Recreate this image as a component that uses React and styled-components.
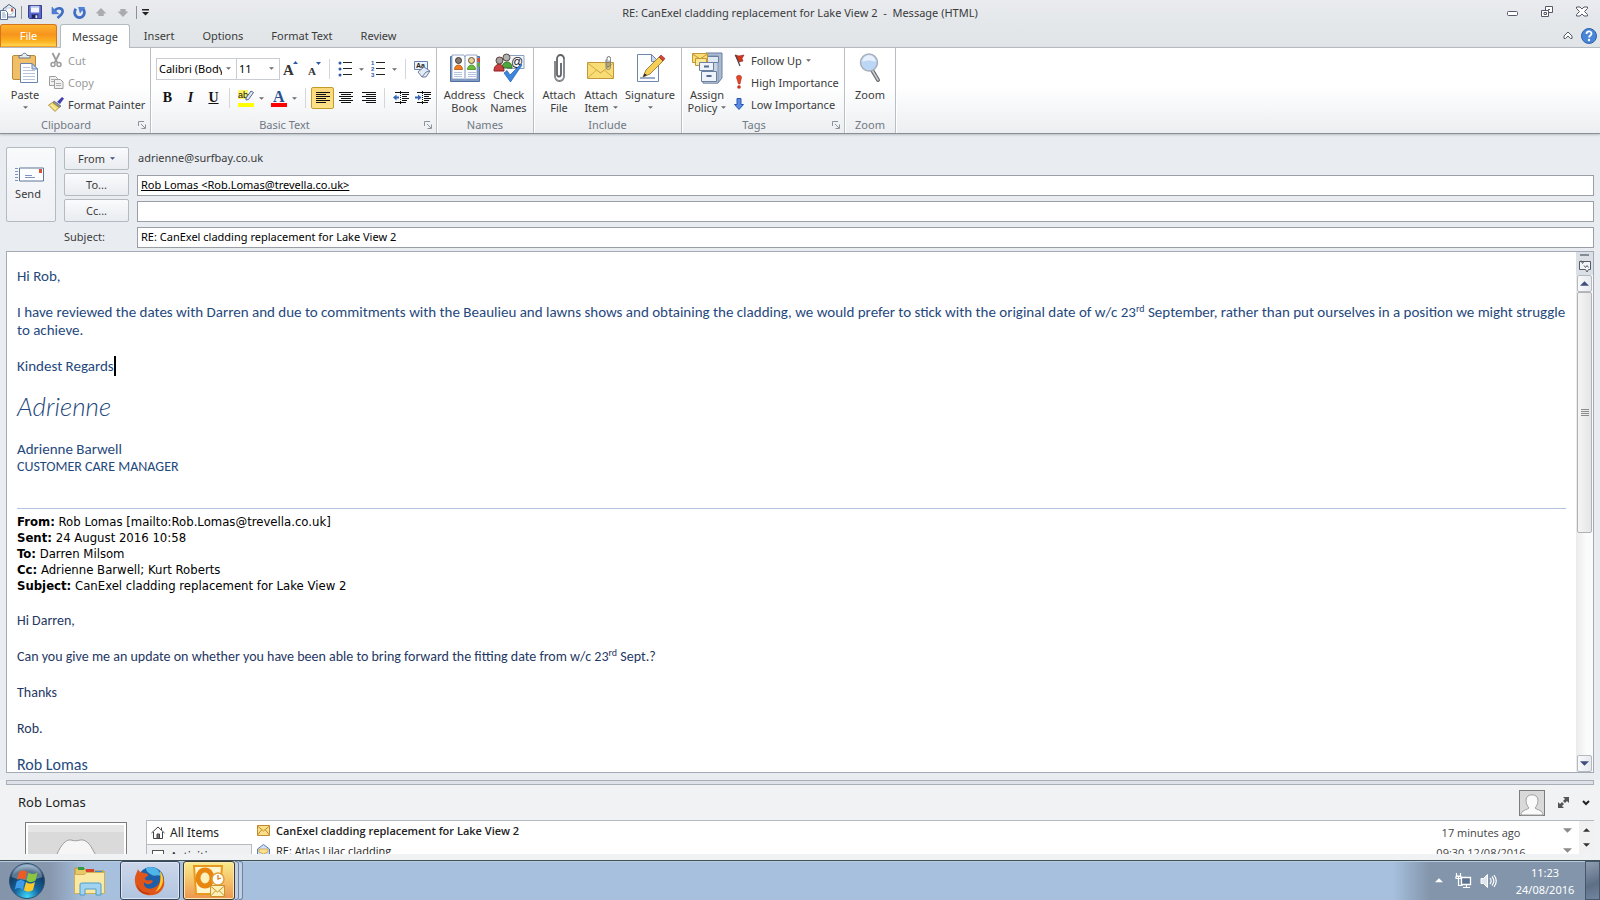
import React from 'react';
import styled, { createGlobalStyle, css } from 'styled-components';

const ui = '"Noto Sans", "Open Sans", sans-serif';
const calibri = 'Calibri, Carlito, Lato, sans-serif';
const tahoma = 'Tahoma, "DejaVu Sans Condensed", "DejaVu Sans", sans-serif';

const GlobalStyle = createGlobalStyle`
  * {
    box-sizing: border-box;
  }

  body {
    margin: 0;
    font-family: ${ui};
    font-size: 11px;
    line-height: 13px;
    color: #3b3b3b;
    background: #e9edf2;
  }

  button, input, select {
    font: inherit;
    color: inherit;
    margin: 0;
    padding: 0;
    border: 0;
    background: none;
    outline: none;
  }

  svg {
    display: block;
    flex: none;
  }
`;

const Window = styled.div`
  height: 100vh;
  display: flex;
  flex-direction: column;
  overflow: hidden;
`;

/* title bar */

const TitleBar = styled.header`
  display: grid;
  grid-template-columns: 1fr auto 1fr;
  align-items: center;
  height: 24px;
  background: linear-gradient(#eaebef, #e3e7ea);

  h1 {
    margin: 0;
    font-size: 11px;
    line-height: 13px;
    font-weight: normal;
    white-space: pre;
  }
`;

const QuickAccess = styled.div`
  display: flex;
  align-items: center;
  gap: 6px;
  height: 22px;
`;

const IconButton = styled.button`
  display: flex;
  align-items: center;
  justify-content: center;
  width: 16px;
  height: 16px;
`;

const Bar = styled.span`
  width: 1px;
  height: 13px;
  margin: 0 -1px;
  background: #8d9299;
`;

const WindowButtons = styled.div`
  display: flex;
  justify-content: flex-end;
  gap: 19px;
  padding-right: 10px;
`;

/* tabs */

const Tabs = styled.nav`
  display: flex;
  align-items: stretch;
  height: 23px;
  background: linear-gradient(#e3e7ea, #e1e5e7);
`;

const Tab = styled.button`
  padding: 0 14px;
  height: 23px;

  ${({ $file }) => $file && css`
    width: 57px;
    margin-right: 3px;
    color: #fff;
    border: 1px solid #d9741c;
    border-bottom-color: #f4a21d;
    border-radius: 3px 3px 0 0;
    background: linear-gradient(#fdb52e, #f7941d 45%, #fbb01f 75%, #ffd34d);
  `}

  ${({ $active }) => $active && css`
    height: 24px;
    padding: 0 11px;
    z-index: 1;
    border: 1px solid #b5bac0;
    border-bottom: 0;
    border-radius: 3px 3px 0 0;
    background: #fff;
  `}
`;

const TabEnd = styled.div`
  display: flex;
  align-items: center;
  gap: 5px;
  margin-left: auto;
  padding-right: 3px;
`;

/* ribbon */

const Ribbon = styled.section`
  display: flex;
  height: 87px;
  flex: none;
  border-top: 1px solid #b5bac0;
  border-bottom: 1px solid #8b9097;
  background: linear-gradient(#fff, #fff 45%, #eceef1);
  box-shadow: 0 1px 2px #b9bdc4;
`;

const GroupBox = styled.div`
  display: flex;
  flex-direction: column;
  width: ${({ $width }) => $width}px;
  border-right: 1px solid #b9bec5;
  box-shadow: 1px 0 0 #fff;
`;

const GroupBody = styled.div`
  display: flex;
  height: 69px;
  padding-left: ${({ $indent }) => $indent || 0}px;
`;

const GroupLabel = styled.div`
  display: flex;
  align-items: center;
  height: 15px;
  color: #707985;

  span {
    flex: 1;
    text-align: center;
  }

  button {
    display: flex;
    align-items: center;
    justify-content: flex-end;
    width: 18px;
    height: 15px;
    padding-right: 4px;
  }
`;

const LargeButton = styled.button`
  display: flex;
  flex-direction: column;
  align-items: center;
  width: ${({ $width }) => $width}px;
  padding-top: 4px;
  white-space: nowrap;

  > svg {
    margin-bottom: 4px;
  }
`;

const Line = styled.span`
  display: flex;
  align-items: center;
  gap: 4px;
  height: 13px;
`;

const SmallColumn = styled.div`
  display: flex;
  flex-direction: column;
  padding: 1px 0 0 1px;
`;

const SmallButton = styled.button`
  display: flex;
  align-items: center;
  gap: 4px;
  height: 22px;
  white-space: nowrap;
  color: ${({ disabled }) => (disabled ? '#9a9a9a' : '#3b3b3b')};
`;

const ToolRows = styled.div`
  display: flex;
  flex-direction: column;
  gap: 7px;
  padding-top: 10px;
`;

const ToolRow = styled.div`
  display: flex;
  align-items: center;
  height: 22px;
`;

const Combo = styled.label`
  display: flex;
  align-items: center;
  width: ${({ $width }) => $width}px;
  height: 22px;
  margin-right: -1px;
  padding: 0 5px 1px 0;
  border: 1px solid #c9cdd3;
  background: #fff;
  color: #000;

  select {
    flex: 1;
    min-width: 0;
    appearance: none;
    margin-right: 4px;
    padding-left: 2px;
    overflow: hidden;
    text-overflow: clip;
  }
`;

const Tool = styled.button`
  display: flex;
  align-items: center;
  justify-content: center;
  width: ${({ $width }) => $width || 23}px;
  height: 22px;

  ${({ $on }) => $on && css`
    border: 1px solid #c29b29;
    border-radius: 2px;
    background: linear-gradient(#fbd77a, #fde28a);
  `}
`;

const Letter = styled.span`
  font: 14px/18px "Liberation Serif", serif;
  font-weight: bold;
  font-style: ${({ $italic }) => ($italic ? 'italic' : 'normal')};
  text-decoration: ${({ $underline }) => ($underline ? 'underline' : 'none')};
  color: #111;
`;

const SplitTool = styled.button`
  display: flex;
  align-items: center;
  gap: 5px;
  width: 33px;
  height: 22px;
  padding-left: 3px;
`;

const Separator = styled.span`
  width: 1px;
  height: 20px;
  margin: 0 5px 0 4px;
  background: #d3d7dc;
`;

/* message header */

const Fields = styled.form`
  display: grid;
  grid-template-columns: 50px 65px 1fr;
  grid-auto-rows: 23px;
  gap: 3px 8px;
  padding: 13px 6px 3px;
  flex: none;
`;

const FieldButton = styled.button`
  display: flex;
  align-items: center;
  justify-content: center;
  gap: 5px;
  border: 1px solid #b5bac1;
  border-radius: 2px;
  background: linear-gradient(#f9fbfd, #f1f3f6 50%, #e9ecf0);
`;

const SendButton = styled(FieldButton)`
  grid-row: span 3;
  flex-direction: column;
  background: linear-gradient(#f8fafc, #eef0f4);
  padding: 0 6px 2px 0;

  svg {
    margin-left: 3px;
  }
`;

const FieldLabel = styled.label`
  grid-column: 2;
  align-self: center;
`;

const FromAddress = styled.span`
  align-self: start;
  padding: 4px 0 0 1px;
`;

const Field = styled.input`
  align-self: end;
  height: 21px;
  padding: 0 3px 2px;
  border: 1px solid #9a9fa7;
  background: #fff;
  color: #000;
  text-decoration: ${({ $recipient }) => ($recipient ? 'underline' : 'none')};
`;

/* message body */

const Editor = styled.section`
  display: flex;
  flex: 1;
  min-height: 0;
  margin: 0 6px 7px;
  border: 1px solid #a3aab5;
  background: #fff;
`;

const Message = styled.article`
  flex: 1;
  min-width: 0;
  overflow: hidden;
  padding: 15px 10px 0;
  font: 15px/18px ${calibri};
  color: #1f497d;

  p {
    margin: 0 0 18px;
  }

  sup {
    font-size: 10px;
    line-height: 0;
    vertical-align: 5px;
  }

  hr {
    margin: 33px 0 5px;
    border: 0;
    border-top: 1px solid #b5c4df;
  }
`;

const Caret = styled.span`
  border-right: 2px solid #000;
  padding: 1px 0;
`;

const Signature = styled.div`
  margin-bottom: 22px;
  font: italic 300 26px/26px "Segoe Print", Lato, sans-serif;
`;

const Contact = styled.p`
  line-height: 17px;
`;

const JobTitle = styled.span`
  font-size: 14px;
`;

const QuotedHeader = styled.div`
  margin-bottom: 18px;
  font: 13px/16px ${tahoma};
  color: #000;
`;

const Quoted = styled.div`
  font-size: 14px;
  color: #1f3864;
`;

const QuotedName = styled.p`
  font-size: 16px;
  color: #1f497d;
`;

const Scrollbar = styled.div`
  display: flex;
  flex-direction: column;
  align-items: center;
  width: 17px;
  background: linear-gradient(to right, #ebebed, #fbfbfb 60%);
`;

const ScrollTools = styled.div`
  display: flex;
  flex-direction: column;
  align-items: center;
  gap: 4px;
  width: 17px;
  height: 23px;
  padding-top: 2px;
  background: #dbe0e7;
`;

const ScrollButton = styled.button`
  display: flex;
  align-items: center;
  justify-content: center;
  width: 15px;
  height: 17px;
  border: 1px solid #b4b9c1;
  border-radius: 2px;
  background: linear-gradient(to right, #f8f9fb, #e6e9ee);
`;

const ScrollTrack = styled.div`
  flex: 1;
  display: flex;
  width: 15px;
`;

const ScrollThumb = styled.div`
  display: flex;
  align-items: center;
  justify-content: center;
  width: 15px;
  height: 52%;
  border: 1px solid #afb1b4;
  border-radius: 2px;
  background: linear-gradient(to right, #f5f5f5, #e5e5e5);
`;

/* people pane */

const PeoplePane = styled.aside`
  flex: none;
  height: 80px;
  padding: 0 6px 6px;
  display: flex;
  flex-direction: column;
  background: #f1f2f4;
`;

const Splitter = styled.div`
  flex: none;
  height: 5px;
  border: 1px solid #a9afb8;
  background: #dfe2e8;
`;

const PersonRow = styled.div`
  flex: none;
  display: flex;
  align-items: center;
  height: 35px;
  padding: 0 4px 0 12px;
  font-size: 13px;
  color: #222;

  svg {
    margin-left: 13px;
  }

  svg:first-of-type {
    margin-left: auto;
  }
`;

const PersonBody = styled.div`
  flex: 1;
  min-height: 0;
  display: flex;
  align-items: flex-start;
  overflow: hidden;
`;

const Photo = styled.div`
  width: 102px;
  height: 96px;
  margin: 2px 19px 0 19px;
  padding: 2px;
  border: 1px solid #7d7d7d;
  background: #fff;
  flex: none;
`;

const Filters = styled.div`
  width: 106px;
  flex: none;
  border-left: 1px solid #b5bac1;
`;

const Filter = styled.button`
  display: flex;
  align-items: center;
  gap: 5px;
  width: 100%;
  height: 24px;
  padding-left: 4px;
  border-top: 1px solid #b5bac1;
  border-right: ${({ $active }) => ($active ? 0 : '1px solid #b5bac1')};
  background: ${({ $active }) => ($active ? '#fff' : '#eff0f2')};
  font-size: 12px;
  color: #222;
`;

const Items = styled.ul`
  flex: 1;
  margin: 0;
  padding: 0;
  list-style: none;
  border-top: 1px solid #b5bac1;
  background: #fff;
`;

const Item = styled.li`
  display: grid;
  grid-template-columns: 14px 1fr 138px 24px;
  column-gap: 5px;
  align-items: center;
  height: 20px;
  padding: 0 0 1px 5px;
  color: #222;
  font-family: "Open Sans", sans-serif;
  font-weight: ${({ $unread }) => ($unread ? 600 : 400)};

  time {
    padding-top: 4px;
    text-align: center;
    font-weight: normal;
    color: #444;
  }

  svg:last-child {
    justify-self: center;
  }
`;

const ItemsScroll = styled.div`
  display: flex;
  flex-direction: column;
  align-items: center;
  gap: 11px;
  width: 15px;
  height: 60px;
  padding-top: 7px;
  border-top: 1px solid #b5bac1;
  background: #f1f1f1;
`;

/* taskbar */

const Taskbar = styled.footer`
  flex: none;
  display: flex;
  align-items: stretch;
  height: 40px;
  border-top: 1px solid #3d5157;
  box-shadow: inset 0 1px 0 #b9cbe0;
  background: linear-gradient(
    to right,
    #8494ab 0,
    #8797ae 50px,
    #a6c0dd 85px,
    #a6c0dd calc(100% - 207px),
    #8395ab calc(100% - 170px),
    #8395ab 100%
  );
`;

const StartButton = styled.button`
  padding: 0 0 0 8px;
  margin-right: 17px;
`;

const TaskButton = styled.button`
  display: flex;
  align-items: center;
  justify-content: center;
  width: ${({ $width }) => $width}px;
  margin-right: 3px;

  ${({ $open }) => $open && css`
    border: 1px solid #39475c;
    border-radius: 3px;
    box-shadow: inset 0 0 0 1px #dce6f3;
    background: linear-gradient(#cbd7ea, #b1c4df);
  `}

  ${({ $active }) => $active && css`
    margin-right: 0;
    border: 1px solid #3f3a2b;
    border-radius: 3px;
    box-shadow: inset 0 0 0 1px #fbe9b5;
    background: linear-gradient(#f8ec8c, #f6c269 50%, #ee9550);
  `}
`;

const StackEdge = styled.span`
  width: 4px;
  border: 1px solid #6d83a0;
  border-left: 0;
  border-radius: 0 3px 3px 0;
  background: #c1d0e4;
`;

const Tray = styled.div`
  display: flex;
  align-items: center;
  gap: 8px;
  margin-left: auto;
`;

const TrayButton = styled.button`
  padding: 4px;
`;

const Clock = styled.time`
  width: 80px;
  text-align: center;
  line-height: 17px;
  color: #fff;
`;

const ShowDesktop = styled.button`
  width: 15px;
  border: 1px solid #46566b;
  background: linear-gradient(160deg, #8f9db0, #5d6f86 60%, #7286a0);
`;

/* icons */

const Arrow = ({ color = '#6b6b6b', size = 5, up }) => (
  <svg width={size} height={(size + 1) / 2} viewBox="0 0 6 3">
    <path d={up ? 'M0 3h6L3 0z' : 'M0 0h6L3 3z'} fill={color} />
  </svg>
);

const Launcher = () => (
  <svg width="8" height="8" viewBox="0 0 8 8" fill="none" stroke="#8b929b">
    <path d="M.5 5V.5H6M3 3l4 4M7.500 3.500v4h-4" />
  </svg>
);

const MailAppIcon = () => (
  <svg width="16" height="16" viewBox="0 0 16 16">
    <path d="M3 5l6-4.500L15.500 5v8H5z" fill="#eef3fa" stroke="#44597b" />
    <path d="M6 4h7v5l-3 2-4-2z" fill="#fff" stroke="#8fa2bf" strokeWidth=".6" />
    <rect x="11" y="4.500" width="2" height="3" fill="#e0582c" />
    <path d="M.5 6.500h5l2 2v7h-7z" fill="#fff" stroke="#566f96" />
    <path d="M2 9h3M2 11h4M2 13h4" stroke="#8ba0c4" />
  </svg>
);

const SaveIcon = () => (
  <svg width="14" height="14" viewBox="0 0 15 15">
    <path d="M.5.5h14v14h-13l-1-1z" fill="#5a6ad0" stroke="#2b3580" />
    <rect x="3" y="1" width="9" height="7" fill="#f4f6fc" />
    <rect x="3" y="1" width="9" height="2" fill="#b8c8ee" />
    <rect x="4" y="10" width="7" height="4" fill="#1e2762" />
    <rect x="8" y="11" width="2" height="3" fill="#e8ebf6" />
  </svg>
);

const UndoIcon = () => (
  <svg width="13" height="13" viewBox="0 0 14 14" fill="none">
    <path d="M4 5c3-4 9-3 8.500 1.500C12 9 10 10.500 7 13" stroke="#3f6fc4" strokeWidth="2.800" />
    <path d="M1 1v7.500h7.500z" fill="#4f80d8" stroke="#3f6fc4" strokeWidth=".5" />
  </svg>
);

const RedoIcon = () => (
  <svg width="13" height="13" viewBox="0 0 14 14" fill="none">
    <path d="M3 3C0 8 3 12.500 7 12.500S14 8 11 3" stroke="#3f6fc4" strokeWidth="3" />
    <path d="M5.500 1H13L7.500 8z" fill="#4f80d8" />
  </svg>
);

const NavArrow = ({ down }) => (
  <svg width="12" height="9" viewBox="0 0 12 10">
    <path d={down ? 'M6 10l6-6H9V1H3v3H0z' : 'M6 0l6 6H9v3H3V6H0z'} fill="#a9abae" />
  </svg>
);

const CustomizeIcon = () => (
  <svg width="7" height="7" viewBox="0 0 7 7">
    <path d="M0 0h7v1.500H0zM0 3h7L3.500 6.500z" fill="#222" />
  </svg>
);

const MinimizeIcon = () => (
  <svg width="11" height="12" viewBox="0 0 11 12">
    <rect x=".5" y="5.500" width="10" height="4" rx="1" fill="#fff" stroke="#545869" />
  </svg>
);

const RestoreIcon = () => (
  <svg width="12" height="12" viewBox="0 0 12 12" fill="#fff" stroke="#545869">
    <path d="M4.500.5h7v6h-7z" />
    <path d="M7 3.500h2" />
    <path d="M.5 4.500h7v6h-7z" />
    <path d="M3 6.500h2.500v2H3z" />
  </svg>
);

const CloseIcon = () => (
  <svg width="12" height="12" viewBox="0 0 12 12">
    <path d="M.5 1h3.500L6 3l2-2h3.500v1.500L8.500 5.500l3 3V10H8L6 8l-2 2H.5V8.500l3-3-3-3z" fill="#fff" stroke="#545869" />
  </svg>
);

const CollapseIcon = () => (
  <svg width="10" height="9" viewBox="0 0 10 9">
    <path d="M5 1l4 4v2.500H7.500L5 5 2.500 7.500H1V5z" fill="#fff" stroke="#545869" />
  </svg>
);

const HelpIcon = () => (
  <svg width="16" height="16" viewBox="0 0 16 16" fill="none">
    <circle cx="8" cy="8" r="7.500" fill="#4a86d8" stroke="#2f62ad" />
    <path d="M5.500 6c0-3.500 5-3.300 5-.5 0 2-2.400 2-2.400 4" stroke="#fff" strokeWidth="1.800" />
    <circle cx="8" cy="12" r="1.200" fill="#fff" />
  </svg>
);

const PasteIcon = () => (
  <svg width="28" height="32" viewBox="0 0 28 32">
    <rect x="1.500" y="3.500" width="23" height="24" rx="1.500" fill="#f0bf67" stroke="#b98a3c" />
    <path d="M8 6V3.500h3C11 .5 16 .5 16 3.500h3V6z" fill="#e8ebef" stroke="#6b7482" />
    <path d="M9.500 11.500H21l5.500 5.500v13.500h-17z" fill="#fff" stroke="#6984ad" />
    <path d="M21 11.500V17h5.500z" fill="#cbdaf0" stroke="#6984ad" />
    <path d="M12 15.500h7M12 18.500h12M12 21.500h12M12 24.500h12M12 27.500h12" stroke="#b7c3d8" />
  </svg>
);

const CutIcon = () => (
  <svg width="16" height="16" viewBox="0 0 16 16" fill="none" stroke="#9c9c9c">
    <path d="M4.500 1l4.700 9.500M11.500 1L6.800 10.500" strokeWidth="1.800" />
    <circle cx="5" cy="12.500" r="2" strokeWidth="1.500" />
    <circle cx="11" cy="12.500" r="2" strokeWidth="1.500" />
  </svg>
);

const CopyIcon = () => (
  <svg width="16" height="16" viewBox="0 0 16 16" fill="#f1f1f1" stroke="#9d9d9d">
    <path d="M1.500 2.500h6l2 2v7h-8z" />
    <path d="M6.500 5.500h6l2.500 2.500v6.500H6.500z" />
    <path d="M3 5.500h3M3 7.500h3M8 9.500h5M8 11.500h5" strokeWidth=".8" />
  </svg>
);

const PainterIcon = () => (
  <svg width="16" height="16" viewBox="0 0 16 16">
    <path d="M9 6l5-5 2 1.500L12 8z" fill="#453fae" />
    <path d="M6 5l7 5-1.500 1.500-7-4.500z" fill="#8c949f" stroke="#4b5361" strokeWidth=".6" />
    <path d="M4.500 6.500l6.500 5-4 4L.5 9z" fill="#f4dc75" stroke="#a4852f" strokeWidth=".8" />
    <path d="M3 9l5 4" stroke="#fff7c9" />
  </svg>
);

const GrowFont = ({ shrink }) => (
  <svg width="18" height="18" viewBox="0 0 18 18">
    <text x={shrink ? 3 : 1} y="15" fontFamily="Liberation Serif" fontWeight="bold" fontSize={shrink ? 11 : 15} fill="#333">A</text>
    <path d={shrink ? 'M11 2h5l-2.500 3z' : 'M11 4h5l-2.500-3z'} fill="#2c5aa8" />
  </svg>
);

const ListIcon = ({ numbered }) => (
  <svg width="16" height="16" viewBox="0 0 16 16">
    {[2, 8, 14].map((y, i) => (
      <g key={y}>
        {numbered
          ? <text x="0" y={y + 2} fontFamily="Liberation Sans" fontSize="6" fontWeight="bold" fill="#2c5aa8">{i + 1}</text>
          : <circle cx="2" cy={y} r="1.500" fill="#2c5aa8" />}
        <path d={`M5 ${y - .5}h9`} stroke="#222" />
      </g>
    ))}
  </svg>
);

const ClearIcon = () => (
  <svg width="18" height="18" viewBox="0 0 18 18">
    <path d="M1.500 1.500h13v8h-13z" fill="#eef3fb" stroke="#6481b0" />
    <text x="3" y="8" fontFamily="Liberation Sans" fontSize="7" fontWeight="bold" fill="#222">Aa</text>
    <path d="M5 12l6-5 6 4-4 6H9z" fill="#e3ebf8" stroke="#6f7f9d" />
    <path d="M9 17l4-5 4-1" fill="none" stroke="#6f7f9d" />
  </svg>
);

const HighlightIcon = () => (
  <svg width="16" height="18" viewBox="0 0 16 18">
    <rect y="1" width="10" height="9" fill="#fdf36a" />
    <text x="0" y="9" fontFamily="Liberation Sans" fontSize="9" fill="#111">ab</text>
    <path d="M8 9l5-7 2.500 1.500-5 7L8 11z" fill="#dfe8f5" stroke="#51698f" />
    <rect y="14" width="16" height="4" fill="#ffff00" />
  </svg>
);

const FontColorIcon = () => (
  <svg width="16" height="18" viewBox="0 0 16 18">
    <text x="2" y="13" fontFamily="Liberation Serif" fontWeight="bold" fontSize="16" fill="#2c4f8f">A</text>
    <rect y="14" width="16" height="4" fill="#ff0000" />
  </svg>
);

const alignments = { left: 0, center: 2, right: 4 };

const AlignIcon = ({ kind }) => (
  <svg width="14" height="12" viewBox="0 0 14 12">
    {[0, 1, 2, 3, 4, 5].map(i => (
      <rect key={i} x={i % 2 ? alignments[kind] : 0} y={i * 2} width={i % 2 ? 10 : 14} height="1" fill="#111" />
    ))}
  </svg>
);

const IndentIcon = ({ out }) => (
  <svg width="16" height="14" viewBox="0 0 16 14">
    <path d="M2 1.500h14M9 3.500h7M9 5.500h5M9 7.500h7M9 9.500h5M2 11.500h11" stroke="#111" />
    <path d="M7.500 0v14" stroke="#111" strokeDasharray="1 1" />
    <path d={out ? 'M0 6.500L3.500 3.500v2H6v2H3.500v2z' : 'M6.500 6.500L3 3.500v2H0v2h3v2z'} fill="#3466b8" />
  </svg>
);

const AddressBookIcon = () => (
  <svg width="32" height="32" viewBox="0 0 32 32">
    <path d="M1.500 4.500h29v25h-29z" fill="#7f9cc9" stroke="#51709f" />
    <path d="M28 6h3v4h-3z" fill="#d84b32" />
    <path d="M28 11h3v4h-3z" fill="#5fae3f" />
    <path d="M3 3h12l1 2 1-2h11v24H17l-1 1-1-1H3z" fill="#fafcff" stroke="#8195b5" strokeWidth=".8" />
    <path d="M16 5v22" stroke="#8195b5" />
    <path d="M5.500 17.500c0-6 8-6 8 0z" fill="#ef7d1a" stroke="#b1520c" strokeWidth=".8" />
    <circle cx="9.500" cy="8.500" r="3" fill="#8b7a70" stroke="#3e3632" />
    <path d="M18.500 17.500c0-6 8-6 8 0z" fill="#6ebd3a" stroke="#3f8a1f" strokeWidth=".8" />
    <circle cx="22.500" cy="8.500" r="3" fill="#e8cf94" stroke="#5e5333" />
    <path d="M5 20.500h8M5 22.500h8M5 24.500h8M19 20.500h8M19 22.500h8M19 24.500h8" stroke="#b7c5dc" />
  </svg>
);

const CheckNamesIcon = () => (
  <svg width="32" height="32" viewBox="0 0 32 32">
    <path d="M14 3.500h17v13H14" fill="#f3f7fd" stroke="#8ba0c0" />
    <text x="18" y="14" fontFamily="Liberation Sans" fontSize="12" fill="#222">@</text>
    <path d="M9 16c0-8 10-8 10 0z" fill="#4da53f" stroke="#2c7424" />
    <circle cx="13.500" cy="5.500" r="3.500" fill="#b5b1ad" stroke="#4d4844" />
    <path d="M1 19c0-9 10-9 10 0z" fill="#c93f3f" stroke="#8f2020" />
    <circle cx="6.500" cy="8.500" r="3.500" fill="#a7a3a0" stroke="#5c3a3a" />
    <path d="M11 21l3-2.500 3 4.500L28 12l1 1-11.500 17z" fill="#3d86dd" stroke="#1f5fb4" strokeWidth=".7" />
  </svg>
);

const ClipPath = ({ x, y, k }) => (
  <g transform={`translate(${x} ${y}) scale(${k})`} fill="none">
    <path d="M2 7v15a4.500 5 0 0 0 9 0V5a3.500 4 0 0 0-7 0v15a2 2.500 0 0 0 4 0V9" stroke="#5d6369" strokeWidth="1.800" />
    <path d="M2 7v15a4.500 5 0 0 0 9 0V5" stroke="#d8dcdf" strokeWidth=".5" />
  </g>
);

const AttachFileIcon = () => (
  <svg width="32" height="32" viewBox="0 0 32 32"><ClipPath x={10} y={2} k={1} /></svg>
);

const AttachItemIcon = () => (
  <svg width="32" height="32" viewBox="0 0 32 32">
    <path d="M2.500 10.500h26v16h-26z" fill="#f8dc74" stroke="#c1973a" />
    <path d="M2.500 26l9-8 4 3 4-3 9 8M2.500 11l13 10 13-10" fill="none" stroke="#d3ac4c" />
    <ClipPath x={20} y={4} k={0.5} />
  </svg>
);

const SignatureIcon = () => (
  <svg width="32" height="32" viewBox="0 0 32 32">
    <path d="M3.500 2.500h14l7 7v20h-21z" fill="#fcfdff" stroke="#6f86ad" />
    <path d="M17.500 2.500v7h7z" fill="#ccdaf0" stroke="#6f86ad" />
    <path d="M6 26h15" stroke="#3b5b93" />
    <path d="M9 25l3-7L25 5l4 4-13 13z" fill="#f6cf58" stroke="#8e6a1e" strokeWidth=".8" />
    <path d="M25 5l2-2 4 3.500L29 9z" fill="#d2453b" stroke="#8a2a22" strokeWidth=".6" />
    <path d="M9 25l1.500-3.500L13 23z" fill="#222" />
  </svg>
);

const PolicyIcon = () => (
  <svg width="32" height="32" viewBox="0 0 32 32">
    <path d="M12 3l3-2h16v25l-4 5H12z" fill="#a9bad2" stroke="#6b7f9e" />
    <path d="M12 4h15v27H12z" fill="#c6d3e5" stroke="#6b7f9e" strokeWidth=".7" />
    <path d="M15.500 4.500h12v6h-12z" fill="#dfe8f3" stroke="#6b7f9e" />
    <path d="M1.500 1.500h15v9h-15z" fill="#f8dc74" stroke="#c1973a" />
    <path d="M1.500 2l7.500 5 7.500-5" fill="none" stroke="#c1973a" />
    <path d="M4.500 6.500h11v7h-11z" fill="#fbe795" stroke="#c1973a" />
    <path d="M8.500 10.500h14v8h-14z" fill="#eef3fa" stroke="#6b7f9e" />
    <path d="M10.500 19.500h15v10h-15z" fill="#eef3fa" stroke="#6b7f9e" />
    <path d="M13 14.500h5M15.500 24h5" stroke="#516a8f" strokeWidth="2" />
  </svg>
);

const FlagIcon = () => (
  <svg width="16" height="16" viewBox="0 0 16 16">
    <path d="M4 3l4 1 5-1-2 3.500 1 2.500-4 1z" fill="#d8341e" stroke="#8d1d10" strokeWidth=".6" />
    <path d="M4.500 3l4.500 11" stroke="#444" strokeWidth="1.200" />
  </svg>
);

const HighIcon = () => (
  <svg width="16" height="16" viewBox="0 0 16 16">
    <path d="M5.500 3.500c0-3 5-3 5 0L9 10H7.500z" fill="#e2472b" stroke="#ab2c16" strokeWidth=".6" />
    <circle cx="8" cy="13" r="1.800" fill="#c9341c" />
  </svg>
);

const LowIcon = () => (
  <svg width="16" height="16" viewBox="0 0 16 16">
    <path d="M6 2.500h4v6h2.500L8 13.500 3.500 8.500H6z" fill="#5a8ce6" stroke="#2b56ae" />
  </svg>
);

const ZoomIcon = () => (
  <svg width="32" height="32" viewBox="0 0 32 32">
    <path d="M18 18l6 10" stroke="#6a6d73" strokeWidth="4" strokeLinecap="round" />
    <path d="M18 18l6 10" stroke="#c9ccd1" strokeWidth="1.500" strokeLinecap="round" />
    <circle cx="15" cy="10.500" r="8.500" fill="#bcd7f5" stroke="#a9afb8" strokeWidth="1.500" />
    <path d="M8.500 10c0-9 13-9 13 0-4-2-9-2-13 0z" fill="#e6f1fd" />
  </svg>
);

const SendIcon = () => (
  <svg width="29" height="15" viewBox="0 0 29 15">
    <path d="M0 1.500h3M0 4.500h3M0 7.500h3M0 10.500h3M0 13.500h3" stroke="#8195b5" />
    <path d="M4.500 1h24v13h-24z" fill="#fdfeff" stroke="#5f7798" />
    <rect x="24" y="2" width="3" height="4" fill="#e0502c" />
    <path d="M10 8.500h7M10 10.500h10" stroke="#7c95c4" />
  </svg>
);

const PageIcon = () => (
  <svg width="12" height="13" viewBox="0 0 12 13" fill="#f3f4f6" stroke="#555b66">
    <path d="M.5 1.500h11v8h-2l-1.500 2.500L6.500 9.500h-6z" />
    <path d="M2 .5l1.500 3 1.500-2M5 5.500l1.500 2L8 5.500l1.500 2" fill="none" />
  </svg>
);

const Silhouette = () => (
  <svg width="96" height="90" viewBox="0 0 96 90">
    <rect width="96" height="90" fill="#dadada" />
    <path d="M0 0h96v7H0z" fill="#e6e6e6" />
    <path d="M20 60c0-12 5-22 9-31 4-9 9-15 14-14 3 1 6 1 9 0 6-1 10 4 14 12 5 8 12 20 12 33v31H20z" fill="#f6f6f6" stroke="#9d9d9d" />
  </svg>
);

const PersonIcon = () => (
  <svg width="26" height="26" viewBox="0 0 26 26">
    <rect x=".5" y=".5" width="25" height="25" fill="#d9d9d9" stroke="#7d7d7d" />
    <path d="M2 25c0-5 6-5 8-7-2-2-3-5-3-8 0-7 12-7 12 0 0 3-1 6-3 8 2 2 8 2 8 7z" fill="#fafafa" stroke="#a0a0a0" />
  </svg>
);

const ExpandIcon = () => (
  <svg width="11" height="11" viewBox="0 0 11 11">
    <path d="M5 0h6v6L9 4 7 6 5 4l2-2zM6 11H0V5l2 2 2-2 2 2-2 2z" fill="#555" />
  </svg>
);

const ChevronIcon = () => (
  <svg width="8" height="6" viewBox="0 0 8 6">
    <path d="M1 1l3 3 3-3" fill="none" stroke="#222" strokeWidth="2" />
  </svg>
);

const HomeIcon = () => (
  <svg width="14" height="13" viewBox="0 0 14 13" fill="none" stroke="#444">
    <path d="M.5 7L7 1l6.500 6M2.500 6v6.500h9V6M10.500 4V1.500" />
    <path d="M6 8h2.500v4.500H6z" fill="#777" />
  </svg>
);

const BoxIcon = () => (
  <svg width="14" height="13" viewBox="0 0 14 13">
    <rect x="1.500" y=".5" width="11" height="12" fill="#fff" stroke="#555" />
  </svg>
);

const EnvelopeIcon = () => (
  <svg width="13" height="11" viewBox="0 0 13 11" fill="none" stroke="#c08a2c">
    <path d="M.5.5h12v10H.5z" fill="#fbe08c" />
    <path d="M.5 1l6 5 6-5M.5 10l4-5M12.500 10l-4-5" />
  </svg>
);

const OpenEnvelopeIcon = () => (
  <svg width="13" height="13" viewBox="0 0 13 13">
    <path d="M.5 5l6-4.500 6 4.500v7.500H.5z" fill="#cfe0f7" stroke="#5f7fb4" />
    <path d="M2 5h9v3l-4.500 2L2 8z" fill="#fbe08c" stroke="#c08a2c" strokeWidth=".6" />
  </svg>
);

const StartIcon = () => (
  <svg width="38" height="38" viewBox="0 0 38 38">
    <defs>
      <radialGradient id="orb" cx=".5" cy=".95" r=".9">
        <stop offset="0" stopColor="#3fd9fb" />
        <stop offset=".4" stopColor="#14659f" />
        <stop offset=".8" stopColor="#12395f" />
        <stop offset="1" stopColor="#7f9fbd" />
      </radialGradient>
    </defs>
    <circle cx="19" cy="19" r="17.500" fill="url(#orb)" stroke="#31506d" />
    <path d="M3.500 15a16 16 0 0 1 31 0c-9 4-22 4-31 0z" fill="#fff" opacity=".3" />
    <path d="M11 10c3-2 5-2 8 0l-2 8c-3-2-5-2-8 0z" fill="#ee5a24" />
    <path d="M20.500 10.500c3 2 5 2 9 0l-2 8c-4 2-6 2-9 0z" fill="#8cc63e" />
    <path d="M8.700 19.500c3-2 5-2 8 0l-2 8c-3-2-5-2-8 0z" fill="#3d9be8" />
    <path d="M18 20c3 2 5 2 9 0l-2 8c-4 2-6 2-9 0z" fill="#fcc82c" />
  </svg>
);

const ExplorerIcon = () => (
  <svg width="34" height="32" viewBox="0 0 34 32">
    <path d="M2 3h9l2 3h18v22H2z" fill="#e9c867" stroke="#b99335" />
    <rect x="5" y="2" width="6" height="3" fill="#2f9d42" />
    <rect x="13" y="4" width="8" height="3" fill="#d6452b" />
    <rect x="22" y="6" width="7" height="3" fill="#3b86d3" />
    <path d="M1.500 9.500h10l2-2h18v21h-30z" fill="#fae9a5" stroke="#cfae54" />
    <path d="M7 30V20c0-2 1-2 3-2h15c2 0 3 0 3 2v10h-5v-6H12v6z" fill="#9fd3f0" stroke="#4f9cc9" />
  </svg>
);

const FirefoxIcon = () => (
  <svg width="32" height="32" viewBox="0 0 32 32">
    <circle cx="17" cy="15" r="13" fill="#1f5fa8" />
    <path d="M12 3c8-3 14 2 15 8-4-2-6 1-9-1s-6-3-6-7z" fill="#4fb4e8" />
    <path d="M4 4c1 3 3 3 6 4 2 0 4 1 4 2 0 2-4 2-3 4 2 3 7 0 8 2-3 5-8 3-9 1-1 5 4 8 9 6 6-2 9-8 7-16 5 6 6 14 1 19C20 34 2 31 1 17 0 11 3 8 4 4z" fill="#e0561a" />
    <path d="M26 6c5 6 4 17-5 21 6-6 6-13 5-21z" fill="#fbd12f" />
    <path d="M3 19c2 7 9 10 15 9-8 3-15-2-15-9z" fill="#b93410" />
  </svg>
);

const OutlookIcon = () => (
  <svg width="34" height="34" viewBox="0 0 34 34">
    <path d="M2 2h28l-2 28H4z" fill="#fff5cf" stroke="#e89a1f" strokeWidth="2" />
    <ellipse cx="13" cy="14" rx="7" ry="8" fill="#fff1bd" stroke="#e8860f" strokeWidth="5" />
    <circle cx="26" cy="15" r="6" fill="#fff" stroke="#e0a03c" strokeWidth="1.500" />
    <path d="M26 11v4l3-1" fill="none" stroke="#d97b17" strokeWidth="1.300" />
    <path d="M18.500 21.500h14v11h-14z" fill="#fdf0b8" stroke="#c9922c" />
    <path d="M18.500 22l7 6 7-6M18.500 32l5-5M32.500 32l-5-5" fill="none" stroke="#c9922c" />
  </svg>
);

const NetworkIcon = () => (
  <svg width="17" height="16" viewBox="0 0 17 16" fill="none" stroke="#fff">
    <path d="M6.500 4.500h9v7h-9z" fill="#5e7390" strokeWidth="1.300" />
    <path d="M8 14.500h7M11.500 12v2" />
    <path d="M1.500 0v3h4V0M3.500 3v9.500h4M1 3.500h5v2H1z" strokeWidth="1.200" />
  </svg>
);

const SoundIcon = () => (
  <svg width="17" height="16" viewBox="0 0 17 16" fill="none" stroke="#fff">
    <path d="M1 5.500h2.500L7.500 1.500v13l-4-4H1z" fill="#dfe6ee" />
    <path d="M10 5c1.500 2 1.500 4 0 6M12 3.500c2.500 3 2.500 6 0 9M14 2c3 4 3 8 0 12" strokeWidth="1.200" />
  </svg>
);

/* parts */

const Group = ({ label, width, indent, launcher, children }) => (
  <GroupBox $width={width}>
    <GroupBody $indent={indent}>{children}</GroupBody>
    <GroupLabel>
      <span>{label}</span>
      {launcher && <button type="button" aria-label={`${label} options`}><Launcher /></button>}
    </GroupLabel>
  </GroupBox>
);

const Large = ({ icon, lines, width, arrow }) => (
  <LargeButton type="button" $width={width}>
    {icon}
    {lines.map((line, i) => (
      <Line key={line}>
        {line}
        {arrow && lines.length === 2 && i === 1 && <Arrow />}
      </Line>
    ))}
    {arrow && lines.length === 1 && <Line><Arrow /></Line>}
  </LargeButton>
);

const tabs = ['Insert', 'Options', 'Format Text', 'Review'];

const quotedHeader = [
  ['From:', 'Rob Lomas [mailto:Rob.Lomas@trevella.co.uk]'],
  ['Sent:', '24 August 2016 10:58'],
  ['To:', 'Darren Milsom'],
  ['Cc:', 'Adrienne Barwell; Kurt Roberts'],
  ['Subject:', 'CanExel cladding replacement for Lake View 2'],
];

const AppTitleBar = () => (
  <TitleBar>
    <QuickAccess>
      <IconButton aria-label="Message"><MailAppIcon /></IconButton>
      <Bar />
      <IconButton aria-label="Save"><SaveIcon /></IconButton>
      <IconButton aria-label="Undo"><UndoIcon /></IconButton>
      <IconButton aria-label="Redo"><RedoIcon /></IconButton>
      <IconButton aria-label="Previous item"><NavArrow /></IconButton>
      <IconButton aria-label="Next item"><NavArrow down /></IconButton>
      <Bar />
      <CustomizeIcon />
    </QuickAccess>
    <h1>{'RE: CanExel cladding replacement for Lake View 2  -  Message (HTML)'}</h1>
    <WindowButtons>
      <IconButton aria-label="Minimize"><MinimizeIcon /></IconButton>
      <IconButton aria-label="Restore"><RestoreIcon /></IconButton>
      <IconButton aria-label="Close"><CloseIcon /></IconButton>
    </WindowButtons>
  </TitleBar>
);

const AppRibbon = () => (
  <Ribbon>
    <Group label="Clipboard" width={151} indent={3} launcher>
      <Large icon={<PasteIcon />} lines={['Paste']} width={44} arrow />
      <SmallColumn>
        <SmallButton disabled><CutIcon />Cut</SmallButton>
        <SmallButton disabled><CopyIcon />Copy</SmallButton>
        <SmallButton><PainterIcon />Format Painter</SmallButton>
      </SmallColumn>
    </Group>

    <Group label="Basic Text" width={286} indent={5} launcher>
      <ToolRows>
        <ToolRow>
          <Combo $width={81}>
            <select aria-label="Font"><option>Calibri (Body)</option></select>
            <Arrow />
          </Combo>
          <Combo $width={44}>
            <select aria-label="Font size"><option>11</option></select>
            <Arrow />
          </Combo>
          <Tool aria-label="Grow font"><GrowFont /></Tool>
          <Tool aria-label="Shrink font"><GrowFont shrink /></Tool>
          <Separator />
          <SplitTool aria-label="Bullets"><ListIcon /><Arrow /></SplitTool>
          <SplitTool aria-label="Numbering"><ListIcon numbered /><Arrow /></SplitTool>
          <Separator />
          <Tool $width={22} aria-label="Clear formatting"><ClearIcon /></Tool>
        </ToolRow>
        <ToolRow>
          <Tool aria-label="Bold"><Letter>B</Letter></Tool>
          <Tool aria-label="Italic"><Letter $italic>I</Letter></Tool>
          <Tool aria-label="Underline"><Letter $underline>U</Letter></Tool>
          <Separator />
          <SplitTool aria-label="Highlight"><HighlightIcon /><Arrow /></SplitTool>
          <SplitTool aria-label="Font color"><FontColorIcon /><Arrow /></SplitTool>
          <Separator />
          <Tool $on aria-label="Align left"><AlignIcon kind="left" /></Tool>
          <Tool aria-label="Center"><AlignIcon kind="center" /></Tool>
          <Tool aria-label="Align right"><AlignIcon kind="right" /></Tool>
          <Separator />
          <Tool $width={22} aria-label="Decrease indent"><IndentIcon out /></Tool>
          <Tool $width={22} aria-label="Increase indent"><IndentIcon /></Tool>
        </ToolRow>
      </ToolRows>
    </Group>

    <Group label="Names" width={97} indent={5}>
      <Large icon={<AddressBookIcon />} lines={['Address', 'Book']} width={45} />
      <Large icon={<CheckNamesIcon />} lines={['Check', 'Names']} width={43} />
    </Group>

    <Group label="Include" width={148} indent={4}>
      <Large icon={<AttachFileIcon />} lines={['Attach', 'File']} width={42} />
      <Large icon={<AttachItemIcon />} lines={['Attach', 'Item']} width={42} arrow />
      <Large icon={<SignatureIcon />} lines={['Signature']} width={56} arrow />
    </Group>

    <Group label="Tags" width={163} indent={2} launcher>
      <Large icon={<PolicyIcon />} lines={['Assign', 'Policy']} width={46} arrow />
      <SmallColumn>
        <SmallButton><FlagIcon />Follow Up <Arrow /></SmallButton>
        <SmallButton><HighIcon />High Importance</SmallButton>
        <SmallButton><LowIcon />Low Importance</SmallButton>
      </SmallColumn>
    </Group>

    <Group label="Zoom" width={51}>
      <Large icon={<ZoomIcon />} lines={['Zoom']} width={50} />
    </Group>
  </Ribbon>
);

const MessageFields = () => (
  <Fields>
    <SendButton type="button"><SendIcon />Send</SendButton>
    <FieldButton type="button">From <Arrow color="#3f4d7a" /></FieldButton>
    <FromAddress>adrienne@surfbay.co.uk</FromAddress>
    <FieldButton type="button">To...</FieldButton>
    <Field $recipient aria-label="To" defaultValue="Rob Lomas <Rob.Lomas@trevella.co.uk>" />
    <FieldButton type="button">Cc...</FieldButton>
    <Field aria-label="Cc" />
    <FieldLabel htmlFor="subject">Subject:</FieldLabel>
    <Field id="subject" defaultValue="RE: CanExel cladding replacement for Lake View 2" />
  </Fields>
);

const MessageEditor = () => (
  <Editor>
    <Message>
      <p>Hi Rob,</p>
      <p>
        I have reviewed the dates with Darren and due to commitments with the Beaulieu and lawns shows and
        obtaining the cladding, we would prefer to stick with the original date of w/c 23<sup>rd</sup> September,
        rather than put ourselves in a position we might struggle to achieve.
      </p>
      <p>Kindest Regards<Caret /></p>
      <Signature>Adrienne</Signature>
      <Contact>
        Adrienne Barwell<br />
        <JobTitle>CUSTOMER CARE MANAGER</JobTitle>
      </Contact>
      <hr />
      <QuotedHeader>
        {quotedHeader.map(([name, value]) => (
          <div key={name}><b>{name}</b> {value}</div>
        ))}
      </QuotedHeader>
      <Quoted>
        <p>Hi Darren,</p>
        <p>
          Can you give me an update on whether you have been able to bring forward the fitting date from
          w/c 23<sup>rd</sup> Sept.?
        </p>
        <p>Thanks</p>
        <p>Rob.</p>
        <QuotedName>Rob Lomas</QuotedName>
      </Quoted>
    </Message>
    <Scrollbar>
      <ScrollTools>
        <svg width="9" height="2"><rect width="9" height="2" fill="#868c95" /></svg>
        <PageIcon />
      </ScrollTools>
      <ScrollButton aria-label="Scroll up"><Arrow up size={9} color="#3f4d7a" /></ScrollButton>
      <ScrollTrack>
        <ScrollThumb>
          <svg width="8" height="7"><path d="M0 .5h8M0 2.500h8M0 4.500h8M0 6.500h8" stroke="#8b8b8b" /></svg>
        </ScrollThumb>
      </ScrollTrack>
      <ScrollButton aria-label="Scroll down"><Arrow size={9} color="#3f4d7a" /></ScrollButton>
    </Scrollbar>
  </Editor>
);

const People = () => (
  <PeoplePane>
    <Splitter />
    <PersonRow>
      Rob Lomas
      <PersonIcon />
      <ExpandIcon />
      <ChevronIcon />
    </PersonRow>
    <PersonBody>
      <Photo><Silhouette /></Photo>
      <Filters>
        <Filter $active><HomeIcon />All Items</Filter>
        <Filter><BoxIcon />Activities</Filter>
      </Filters>
      <Items>
        <Item $unread>
          <EnvelopeIcon />
          <span>CanExel cladding replacement for Lake View 2</span>
          <time>17 minutes ago</time>
          <Arrow size={9} color="#8b8b8b" />
        </Item>
        <Item>
          <OpenEnvelopeIcon />
          <span>RE: Atlas Lilac cladding</span>
          <time>09:30 12/08/2016</time>
          <Arrow size={9} color="#8b8b8b" />
        </Item>
      </Items>
      <ItemsScroll>
        <Arrow up size={7} color="#333" />
        <Arrow size={7} color="#333" />
      </ItemsScroll>
    </PersonBody>
  </PeoplePane>
);

const WindowsTaskbar = () => (
  <Taskbar>
    <StartButton aria-label="Start"><StartIcon /></StartButton>
    <TaskButton $width={54} aria-label="Windows Explorer"><ExplorerIcon /></TaskButton>
    <TaskButton $width={60} $open aria-label="Firefox"><FirefoxIcon /></TaskButton>
    <TaskButton $width={52} $active aria-label="Outlook"><OutlookIcon /></TaskButton>
    <StackEdge />
    <StackEdge />
    <Tray>
      <TrayButton aria-label="Show hidden icons"><Arrow up size={8} color="#fff" /></TrayButton>
      <NetworkIcon />
      <SoundIcon />
      <Clock>11:23<br />24/08/2016</Clock>
    </Tray>
    <ShowDesktop aria-label="Show desktop" />
  </Taskbar>
);

export default function App() {
  return (
    <Window>
      <GlobalStyle />
      <AppTitleBar />
      <Tabs>
        <Tab $file>File</Tab>
        <Tab $active>Message</Tab>
        {tabs.map(name => <Tab key={name}>{name}</Tab>)}
        <TabEnd>
          <IconButton aria-label="Minimize the ribbon"><CollapseIcon /></IconButton>
          <IconButton aria-label="Help"><HelpIcon /></IconButton>
        </TabEnd>
      </Tabs>
      <AppRibbon />
      <MessageFields />
      <MessageEditor />
      <People />
      <WindowsTaskbar />
    </Window>
  );
}
